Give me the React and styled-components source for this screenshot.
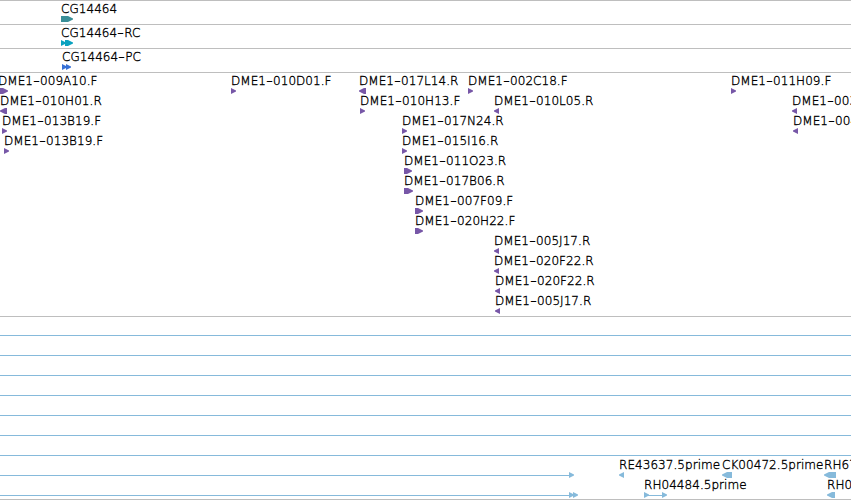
import React from 'react';
import styled, { createGlobalStyle } from 'styled-components';

const GlobalStyle = createGlobalStyle`
  body {
    margin: 0;
    background-color: #fff;
  }
`;

const Browser = styled.main`
  width: 851px;
  height: 500px;
  overflow: hidden;
  background-color: #fff;
`;

const Track = styled.section`
  box-sizing: border-box;
  border-top: 1px solid #bebebe;
  padding: 1px 0 2px;
  &:last-child {
    padding-bottom: 1px;
    border-bottom: 1px solid #bebebe;
  }
`;

/* every feature shares one grid cell, so long labels may run past each other */
const Row = styled.div`
  display: grid;
  grid-template-columns: 851px;
  height: 20px;
  overflow: hidden;
`;

const Feature = styled.div`
  grid-area: 1 / 1;
  display: flex;
  flex-direction: column;
  justify-content: flex-end;
  height: 20px;
  margin-left: ${(props) => props.$start}px;
  color: ${(props) => props.$color};
`;

const Label = styled.span`
  height: 14px;
  color: #000;
  font-family: 'DejaVu Sans', sans-serif;
  font-size: 12px;
  font-weight: 200;
  -webkit-text-stroke: 0.35px #000;
  letter-spacing: 0.05px;
  line-height: 14px;
  white-space: nowrap;
`;

const Dash = styled.span`
  display: inline-block;
  width: 7px;
  text-align: center;
  transform: scaleX(1.5);
`;

const Glyph = styled.svg`
  display: block;
  flex: none;
`;

const PURPLE = '#7757a7';
const BLUE = '#86badb';

const right = (x, w) => `${x},0 ${x + w - 5},0 ${x + w},2.4 ${x + w},3.6 ${x + w - 5},6 ${x},6`;
const left = (x, w) => `${x + w},0 ${x + 5},0 ${x},2.4 ${x},3.6 ${x + 5},6 ${x + w},6`;

const f = (start, name, width = 5) => ({
  start,
  name,
  color: PURPLE,
  arrows: [right(0, width)],
});
const r = (start, name, width = 5) => ({
  start,
  name,
  color: PURPLE,
  arrows: [left(0, width)],
});

const intron = { start: 0, color: BLUE, line: [0, 851], arrows: [] };

const tracks = [
  [[{ start: 61, name: 'CG14464', color: '#3a8f98', arrows: [right(0, 12)] }]],
  [[{ start: 61, name: 'CG14464-RC', color: '#0aa2c0', arrows: [right(0, 5), right(4, 8)] }]],
  [[{ start: 62, name: 'CG14464-PC', color: '#3670d6', arrows: [right(0, 5), right(4, 5)] }]],
  [
    [
      f(-2, 'DME1-009A10.F', 10),
      f(231, 'DME1-010D01.F'),
      r(359, 'DME1-017L14.R', 7),
      f(468, 'DME1-002C18.F'),
      f(731, 'DME1-011H09.F'),
    ],
    [
      r(0, 'DME1-010H01.R', 7),
      f(360, 'DME1-010H13.F'),
      r(494, 'DME1-010L05.R'),
      r(792, 'DME1-003N04.R'),
    ],
    [f(2, 'DME1-013B19.F'), f(402, 'DME1-017N24.R'), r(793, 'DME1-004I05.R')],
    [f(4, 'DME1-013B19.F'), f(402, 'DME1-015I16.R')],
    [f(404, 'DME1-011O23.R', 8)],
    [f(404, 'DME1-017B06.R', 9)],
    [f(415, 'DME1-007F09.F', 8)],
    [f(415, 'DME1-020H22.F', 8)],
    [r(494, 'DME1-005J17.R')],
    [r(494, 'DME1-020F22.R')],
    [r(495, 'DME1-020F22.R')],
    [r(495, 'DME1-005J17.R')],
  ],
  [
    [intron],
    [intron],
    [intron],
    [intron],
    [intron],
    [intron],
    [intron],
    [
      { start: 0, color: BLUE, line: [0, 570], arrows: [right(569, 5)] },
      { start: 619, name: 'RE43637.5prime', color: BLUE, arrows: [left(0, 5)] },
      { start: 722, name: 'CK00472.5prime', color: BLUE, arrows: [left(0, 10)] },
      { start: 824, name: 'RH67103.5prime', color: BLUE, arrows: [left(0, 12)] },
    ],
    [
      { start: 0, color: BLUE, line: [0, 570], arrows: [right(569, 5), right(573, 5)] },
      { start: 644, name: 'RH04484.5prime', color: BLUE, line: [0, 20], arrows: [right(0, 5), right(18, 5)] },
      { start: 827, name: 'RH04502.5prime', color: BLUE, arrows: [left(0, 8)] },
    ],
  ],
];

const FeatureName = ({ name }) => {
  const [prefix, rest] = name.split('-');
  return (
    <Label>
      {prefix}
      {rest && <Dash>-</Dash>}
      {rest}
    </Label>
  );
};

const GenomeFeature = ({ start, name, color, line, arrows }) => (
  <Feature $start={start} $color={color}>
    {name && <FeatureName name={name} />}
    <Glyph width="851" height="6" fill="currentColor">
      {line && <rect x={line[0]} y="3" width={line[1] - line[0]} height="1" />}
      {arrows.map((points) => (
        <polygon key={points} points={points} />
      ))}
    </Glyph>
  </Feature>
);

const App = () => {
  return (
    <Browser>
      {tracks.map((rows, i) => (
        <Track key={i}>
          {rows.map((features, j) => (
            <Row key={j}>
              {features.map((item, k) => (
                <GenomeFeature key={k} {...item} />
              ))}
            </Row>
          ))}
        </Track>
      ))}
      <GlobalStyle />
    </Browser>
  );
};

export default App;
